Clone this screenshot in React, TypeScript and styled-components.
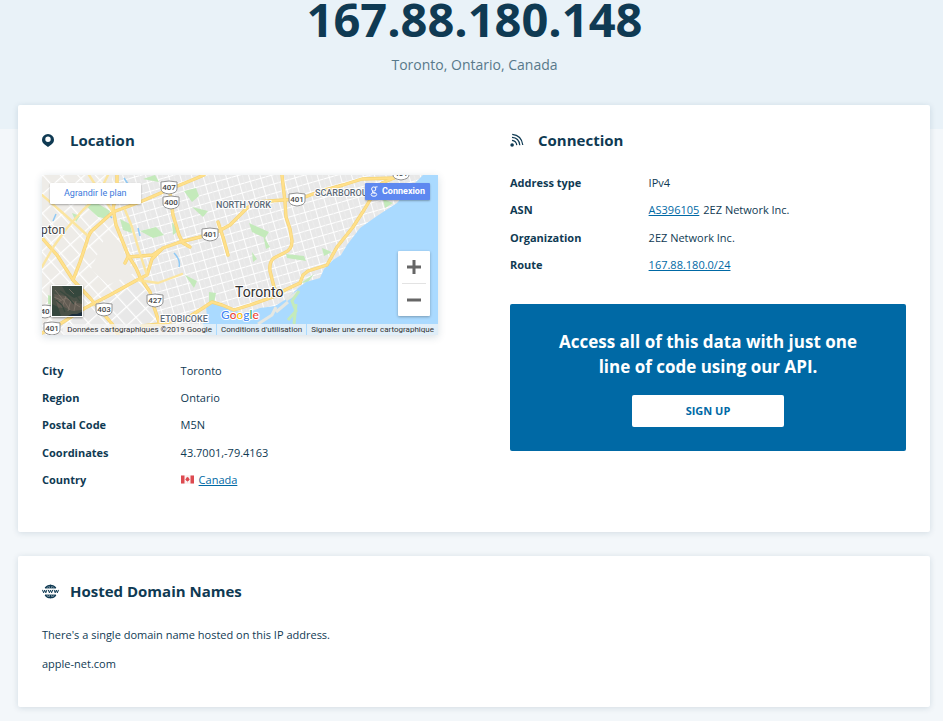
import React from "react";
import styled, { createGlobalStyle } from "styled-components";

const ink = "#0f3a53";
const blue = "#0069a5";

const GlobalStyle = createGlobalStyle`
  * { box-sizing: border-box; }
  body {
    margin: 0;
    background: #f3f7fa;
    color: ${ink};
    font-family: "Open Sans", "Noto Sans", sans-serif;
    font-size: 11px;
    line-height: 16px;
  }
`;

const Hero = styled.header`
  padding: 0 12px 53px 18px;
  background: #e9f2f8;
  text-align: center;
`;

const Address = styled.h1`
  margin: 0;
  font-size: 47px;
  line-height: 38px;
  font-weight: 700;
`;

const Place = styled.p`
  margin: 0;
  padding-top: 15px;
  font-size: 14px;
  line-height: 23px;
  color: #58798a;
`;

const Main = styled.main`
  display: flex;
  flex-direction: column;
  gap: 24px;
  margin-top: -24px;
  padding: 0 13px 14px 18px;
`;

const Card = styled.section`
  padding: 24px 24px 35px;
  background: #fff;
  border-radius: 2px;
  box-shadow: 0 1px 6px rgba(15, 58, 83, 0.14);
`;

const Columns = styled(Card)`
  display: grid;
  grid-template-columns: 1fr 1fr;
  gap: 72px;
  padding-bottom: 39px;
`;

const CardTitle = styled.h2`
  display: flex;
  align-items: center;
  margin: 0;
  font-size: 15px;
  line-height: 22px;
  font-weight: 700;
`;

const IconSlot = styled.span`
  display: flex;
  width: 28px;
`;

const Facts = styled.dl<{ $top: number; $height: number }>`
  display: grid;
  grid-auto-rows: 1fr;
  min-height: ${(p) => p.$height}px;
  margin: ${(p) => p.$top}px 0 0;
`;

const Fact = styled.div`
  display: grid;
  grid-template-columns: 35% 1fr;
  line-height: 27px;
`;

const Term = styled.dt`
  font-weight: 700;
`;

const Detail = styled.dd`
  display: flex;
  align-items: center;
  gap: 4px;
  margin: 0;
`;

const Link = styled.a`
  color: ${blue};
  text-decoration: underline;
`;

const Promo = styled.aside`
  display: flex;
  flex-direction: column;
  align-items: center;
  gap: 16px;
  margin-top: 26px;
  padding: 25px 40px 24px;
  border-radius: 2px;
  background: ${blue};
`;

const PromoText = styled.h3`
  margin: 0;
  color: #fff;
  font-size: 17px;
  line-height: 25px;
  font-weight: 700;
  text-align: center;
`;

const SignUp = styled.button`
  width: 152px;
  height: 32px;
  border: 0;
  border-radius: 2px;
  background: #fff;
  color: ${blue};
  font: 700 11px/16px "Open Sans", sans-serif;
`;

const Paragraph = styled.p<{ $top: number }>`
  margin: ${(p) => p.$top}px 0 0;
`;

const MapFrame = styled.div`
  position: relative;
  height: 160px;
  margin-top: 24px;
  overflow: hidden;
  font-family: Roboto, sans-serif;
`;

const MapShadow = styled.div`
  box-shadow: 0 2px 8px rgba(15, 58, 83, 0.16);
`;

const MapArt = styled.svg`
  display: block;
  width: 100%;
  height: 100%;
`;

const Enlarge = styled.a`
  position: absolute;
  top: 8px;
  left: 8px;
  padding: 0 14px;
  border-radius: 1px;
  background: #fff;
  box-shadow: 0 1px 2px rgba(0, 0, 0, 0.3);
  color: #3a78dc;
  font-size: 9px;
  line-height: 21px;
  text-decoration: none;
  white-space: nowrap;
`;

const Connect = styled.button`
  position: absolute;
  top: 8px;
  right: 8px;
  display: flex;
  align-items: center;
  gap: 4px;
  height: 17px;
  padding: 0 5px;
  border: 0;
  border-radius: 1px;
  background: #5e88f0;
  box-shadow: 0 1px 2px rgba(0, 0, 0, 0.3);
  color: #fff;
  font: 700 9px/17px Roboto, sans-serif;
`;

const ZoomControls = styled.div`
  position: absolute;
  right: 8px;
  bottom: 19px;
  width: 32px;
  padding: 0 4px;
  border-radius: 1px;
  background: #fff;
  box-shadow: 0 1px 3px rgba(0, 0, 0, 0.3);
`;

const ZoomButton = styled.button`
  display: flex;
  align-items: center;
  justify-content: center;
  width: 100%;
  height: 32px;
  padding: 0;
  border: 0;
  background: none;

  & + & {
    height: 33px;
    border-top: 1px solid #e3e3e3;
  }
`;

const Satellite = styled.button`
  position: absolute;
  left: 9px;
  bottom: 18px;
  width: 32px;
  height: 32px;
  padding: 0;
  border: 1px solid #fff;
  box-shadow: 0 1px 2px rgba(0, 0, 0, 0.4);
`;

const Attribution = styled.div`
  position: absolute;
  right: 0;
  bottom: 0;
  display: flex;
  height: 11px;
  color: #333;
  font-size: 8px;
  line-height: 12px;
  white-space: nowrap;
`;

const Credit = styled.span`
  padding: 0 4px;
  background: rgba(245, 245, 245, 0.72);

  & + & {
    margin-left: 1px;
  }
`;

const CreditLink = styled.a`
  color: inherit;
  text-decoration: none;
`;

const PinIcon = () => (
  <svg width="12" height="14" viewBox="0 0 12 14" aria-hidden="true">
    <path
      fill={ink}
      fillRule="evenodd"
      d="M6 1a6 5.700 0 0 1 6 5.700c0 2-1 3.600-2.600 4.900L6 14l-3.400-2.400C1 10.300 0 8.700 0 6.700A6 5.700 0 0 1 6 1Zm0 2.600a2.700 2.700 0 1 0 0 5.400 2.700 2.700 0 0 0 0-5.400Z"
    />
  </svg>
);

const SignalIcon = () => (
  <svg width="14" height="14" viewBox="0 0 14 14" fill="none" stroke={ink} strokeWidth="1.200" aria-hidden="true">
    <circle cx="2.100" cy="12" r="1.800" fill={ink} stroke="none" />
    <path d="M2 7.400Q6.200 7.800 6.800 12.200M2 4.400Q9 4.800 9.800 12.200M2.200 1.400Q11.500 2.200 12.800 12" />
  </svg>
);

const GlobeIcon = () => (
  <svg width="17" height="15" viewBox="0 0 17 15" aria-hidden="true">
    <g fill="none" stroke={ink}>
      <path strokeWidth="1.300" d="M3.200 4.200a6.300 6.300 0 0 1 10.600 0M3.200 10.800a6.300 6.300 0 0 0 10.600 0" />
      <path strokeWidth="1" d="M3.400 3.900h10.200M3.400 11.100h10.200M6 4Q6.800 2 8.500 1.200q1.700.8 2.500 2.800M6 11q.8 2 2.500 2.800 1.700-.8 2.500-2.800M8.500 1v3M8.500 11v3" />
    </g>
    <path
      d="M.5 5.900l1.100 2.900 1.100-2.700 1.100 2.700 1.100-2.900M6.300 5.900l1.100 2.900 1.100-2.700 1.100 2.700 1.100-2.900M12.100 5.900l1.100 2.900 1.100-2.700 1.100 2.700 1.100-2.900"
      fill="none"
      stroke={ink}
      strokeWidth="1"
    />
  </svg>
);

const CanadaFlag = () => (
  <svg width="14" height="9" viewBox="0 0 14 9" role="img" aria-label="Flag of Canada">
    <path fill="#fbf3f3" d="M0 0h13v9H0z" />
    <path fill="#dd4a50" d="M0 .5h3.500v8H0zM9.500 .5H13v8H9.500zM6.500 1.800l.7.900.8-.2-.1 1.200 1 .3L7.500 6l-.7-.1V7.200h-.5V5.900L5.500 6 4.100 4l1-.3L5 2.500l.8.2z" />
  </svg>
);

const highways = [
  "M0 158L18 149L43 133L68 120L95 105L105 100L110 84L121 73L138 67L158 62L175 57L188 50L205 33L215 27L241 25L258 24L276 17L301 10L320 4L352 3",
  "M31 105L38 87L45 66Q47 57 53 53L71 37L98 27L121 17L138 10L155 3L162 0",
  "M75 0L75 18L71 33L74 50L86 80L94 93L98 102L108 117L112 132L118 150",
  "M128 18L131 40L137 60L141 68L148 72",
  "M0 63L15 80L31 105L48 123L71 150L76 160",
  "M83 88L86 82L111 80L118 75",
  "M176 47L181 62L186 80",
  "M100 151L118 149L145 143L161 133L170 127L180 130L192 135L208 130L231 122L243 115L258 108",
  "M240 0L243 27L244 42L248 54L250 66Q250 75 242 78L232 83Q227 87 228 96L232 112L236 121",
  "M258 108L261 100L266 96L285 90L295 72L311 52L322 35L331 20L340 8L352 3",
];

const roads = [
  "M0 92L12 71L25 53L41 35L55 22L66 0",
  "M83 35L90 52L96 72L101 88L105 100",
  "M0 20L22 39L45 60M71 37L47 0",
  "M95 105L116 108L140 99",
];

const greens = [
  "M43 30L55 28L68 36L66 44L56 42Z", "M78 44l10 5 2 9 -9 -3zM98 56l16 -4 8 8 -11 3zM142 16l12 -3 3 8 -7 6zM150 32l16 4 -5 6z",
  "M130 47l6 9 -5 4zM143 100l12 6 -3 7zM167 117l7 1 -2 10 -5 -1z", "M207 48l20 9 -4 6 -13 -6zM221 60l7 12 -4 2z",
  "M244 79l18 2 2 5 -19 -3zM280 73l10 4 -8 4zM341 24l10 4 -8 5zM101 4l12 -4 4 7zM6 120l8 3 4 9 -12 -3zM272 99l-6 8 -7 1zM30 38l8 3 -4 6zM210 77l5 7 -4 3z",
];

const Shield = ({ x, y, n }: { x: number; y: number; n: string }) => (
  <g transform={`translate(${x} ${y})`}>
    <path d="M-8-5Q0-7 8-5V2Q8 6 0 7Q-8 6-8 2Z" fill="#fff" stroke="#929292" />
    <text y="3" textAnchor="middle" fontSize="8" fontWeight="500" fill="#484848">{n}</text>
  </g>
);

const TorontoMap = () => (
  <MapArt viewBox="0 0 396 160" preserveAspectRatio="xMidYMid slice" role="img" aria-label="Map of Toronto">
    <defs>
      <pattern id="city" width="11" height="9" patternUnits="userSpaceOnUse" patternTransform="rotate(-16)">
        <path d="M0 0H11M0 0V9" stroke="#fff" strokeWidth="1.800" />
        <path d="M5.500 0V9" stroke="#eee" strokeWidth=".8" />
      </pattern>
      <pattern id="suburb" width="13" height="14" patternUnits="userSpaceOnUse" patternTransform="rotate(-42)">
        <path d="M0 0H13M0 0V14" stroke="#fff" strokeWidth="2.400" />
      </pattern>
    </defs>
    <path fill="#e8e8e8" d="M0 0H396V160H0Z" />
    <path fill="#eeece8" d="M0 0H72L88 82L96 100L76 120L0 150Z" />
    <path fill="url(#city)" d="M70 0H396V160H118L108 117L96 93L71 37Z" />
    <path fill="url(#suburb)" d="M0 0H70L71 37L96 93L108 117L118 160H0Z" />
    <path fill="#eeece8" d="M64 60L76 65L86 85L92 98L66 110L49 94Z" />
    {greens.map((d) => <path key={d} d={d} fill="#c4eabb" />)}
    <path
      fill="#aadaff"
      d="M163 160L161 149L165 141L164 133L170 128L177 128L188 135L204 138L218 133L233 131L246 123L256 113L264 107L278 103L282 94L291 85L299 80L305 70L318 53L335 41L355 28L368 13L381 0H396V160Z"
    />
    <path fill="none" stroke="#e5e7e2" strokeWidth="3" d="M216 149L230 140L234 132M234 137L246 127M244 125L256 117" />
    <path fill="none" stroke="#c4eabb" strokeWidth="3" d="M257 116L250 126L254 136L246 145M254 129L252 149" />
    <path fill="none" stroke="#8fc9f5" strokeWidth="1.500" d="M14 39l-3 7M66 39l4 4M96 53l2 8M132 78q7 7 5 14M82 3l4 6" />
    <g fill="none" strokeLinejoin="round" strokeLinecap="round">
      <g stroke="#f5d477" strokeWidth="3.400">{highways.map((d) => <path key={d} d={d} />)}</g>
      <g stroke="#fbe5a0" strokeWidth="2.400">{roads.map((d) => <path key={d} d={d} />)}</g>
      <g stroke="#ffe08b" strokeWidth="2.200">{highways.map((d) => <path key={d} d={d} />)}</g>
    </g>
    <Shield x={127} y={12} n="407" />
    <Shield x={129} y={27} n="400" />
    <Shield x={168} y={59} n="401" />
    <Shield x={113} y={125} n="427" />
    <Shield x={62} y={134} n="403" />
    <Shield x={3} y={136} n="40" />
    <Shield x={10} y={153} n="401" />
    <Shield x={255} y={24} n="401" />
    <Shield x={359} y={-2} n="401" />
    <g stroke="#fff" strokeWidth="2" strokeLinejoin="round" paintOrder="stroke" fontWeight="500">
      <g fill="#5d6b78" fontSize="9">
        <text x="174" y="33">NORTH YORK</text>
        <text x="273" y="21">SCARBOROUGH</text>
        <text x="118" y="147">ETOBICOKE</text>
      </g>
      <text x="-1" y="59" fontSize="12" fontWeight="400" fill="#444">pton</text>
      <text x="193" y="122" fontSize="14" fontWeight="400" fill="#303030">Toronto</text>
      <text x="179" y="144" fontSize="12" fontFamily="Lato, sans-serif">
        <tspan fill="#4285f4">G</tspan><tspan fill="#ea4335">o</tspan><tspan fill="#fbbc05">o</tspan>
        <tspan fill="#4285f4">g</tspan><tspan fill="#34a853">l</tspan><tspan fill="#ea4335">e</tspan>
      </text>
    </g>
  </MapArt>
);

const SatelliteArt = () => (
  <MapArt viewBox="0 0 30 30" preserveAspectRatio="none" aria-hidden="true">
    <path fill="#4a5147" d="M0 0H30V30H0Z" />
    <path fill="#625c53" d="M2 8L13 10L25 17L30 18V24L20 25L12 21L6 22Z" />
    <path fill="#35473d" d="M10 0H30V9L22 12L14 7ZM0 18L6 21L9 30H0Z" />
    <path fill="#1c2e3c" d="M16 30L20 28L25 28L30 26V30Z" />
    <path fill="none" stroke="#857a6e" strokeWidth=".7" d="M3 4L12 15L18 24M6 16L14 12L28 21M14 10L10 22M19 14L16 25M24 15L22 25M2 11L9 14M17 3L22 8" />
    <path fill="none" stroke="#39493f" strokeWidth="1.200" d="M4 14L10 19L13 26M8 5L15 10L22 18M25 11L28 15" />
  </MapArt>
);

const LocationMap = () => (
  <MapShadow>
    <MapFrame>
      <TorontoMap />
      <Enlarge href="#map">Agrandir le plan</Enlarge>
      <Connect type="button">
        <svg width="8" height="11" viewBox="0 0 8 11" fill="none" stroke="#fff" aria-hidden="true">
          <ellipse cx="3.700" cy="3" rx="2.100" ry="2.100" />
          <path d="M5 1.200L7.500.8M3 5q-1.500 1.200 0 1.700L5 7.200" />
          <ellipse cx="3.900" cy="8.500" rx="2.800" ry="1.800" />
        </svg>
        Connexion
      </Connect>
      <ZoomControls>
        <ZoomButton type="button" aria-label="Zoom in">
          <svg width="14" height="14" viewBox="0 0 14 14" aria-hidden="true">
            <path fill="#666" d="M5.500 0h3v5.500H14v3H8.500V14h-3V8.500H0v-3h5.500z" />
          </svg>
        </ZoomButton>
        <ZoomButton type="button" aria-label="Zoom out">
          <svg width="14" height="14" viewBox="0 0 14 14" aria-hidden="true">
            <path fill="#666" d="M0 5.500h14v3H0z" />
          </svg>
        </ZoomButton>
      </ZoomControls>
      <Satellite type="button" aria-label="Satellite view"><SatelliteArt /></Satellite>
      <Attribution>
        <Credit>Données cartographiques ©2019 Google</Credit>
        <Credit><CreditLink href="#terms">Conditions d'utilisation</CreditLink></Credit>
        <Credit><CreditLink href="#report">Signaler une erreur cartographique</CreditLink></Credit>
      </Attribution>
    </MapFrame>
  </MapShadow>
);

const FactRow = ({ label, children }: { label: string; children: React.ReactNode }) => (
  <Fact>
    <Term>{label}</Term>
    <Detail>{children}</Detail>
  </Fact>
);

export default function App() {
  return (
    <>
      <GlobalStyle />
      <Hero>
        <Address>167.88.180.148</Address>
        <Place>Toronto, Ontario, Canada</Place>
      </Hero>
      <Main>
        <Columns as="div">
          <section>
            <CardTitle><IconSlot><PinIcon /></IconSlot>Location</CardTitle>
            <LocationMap />
            <Facts $top={22} $height={136}>
              <FactRow label="City">Toronto</FactRow>
              <FactRow label="Region">Ontario</FactRow>
              <FactRow label="Postal Code">M5N</FactRow>
              <FactRow label="Coordinates">43.7001,-79.4163</FactRow>
              <FactRow label="Country"><CanadaFlag /><Link href="#canada">Canada</Link></FactRow>
            </Facts>
          </section>
          <section>
            <CardTitle><IconSlot><SignalIcon /></IconSlot>Connection</CardTitle>
            <Facts $top={18} $height={109}>
              <FactRow label="Address type">IPv4</FactRow>
              <FactRow label="ASN"><Link href="#asn">AS396105</Link>2EZ Network Inc.</FactRow>
              <FactRow label="Organization">2EZ Network Inc.</FactRow>
              <FactRow label="Route"><Link href="#route">167.88.180.0/24</Link></FactRow>
            </Facts>
            <Promo>
              <PromoText>Access all of this data with just one line of code using our API.</PromoText>
              <SignUp type="button">SIGN UP</SignUp>
            </Promo>
          </section>
        </Columns>
        <Card>
          <CardTitle><IconSlot><GlobeIcon /></IconSlot>Hosted Domain Names</CardTitle>
          <Paragraph $top={25}>There's a single domain name hosted on this IP address.</Paragraph>
          <Paragraph $top={13}>apple-net.com</Paragraph>
        </Card>
      </Main>
    </>
  );
}
